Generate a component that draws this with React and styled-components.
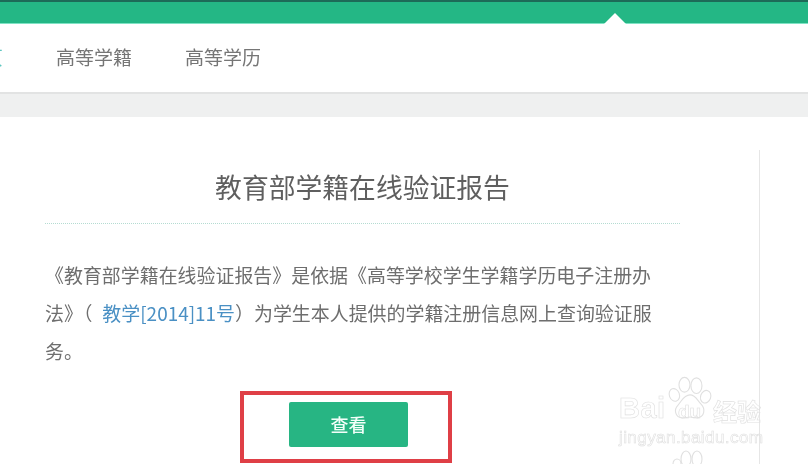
import React from "react";
import styled, { createGlobalStyle } from "styled-components";

const Global = createGlobalStyle`
  html, body { margin: 0; padding: 0; background: #fff; overflow: hidden; width: 808px; height: 464px; }
  * { box-sizing: border-box; }
`;
const Page = styled.div`
  position: relative;
  width: 808px;
  height: 464px;
  overflow: hidden;
  font-family: "Noto Sans CJK SC", "Liberation Sans", sans-serif;
`;
const Blurred = styled.div`
  filter: blur(0.7px);
`;
const TopBar = styled.header`
  position: relative;
  height: 24px;
  background: #24b785;
  border-top: 2px solid #1d6b58;
  border-bottom: 1px solid #7fe3c4;
`;
const Caret = styled.span`
  position: absolute;
  left: 604px;
  bottom: -1px;
  width: 0;
  height: 0;
  border-left: 11px solid transparent;
  border-right: 11px solid transparent;
  border-bottom: 11px solid #fff;
`;
const Nav = styled.nav`
  height: 68px;
  display: flex;
  align-items: center;
  gap: 53px;
  margin-left: -35px;
  padding-bottom: 4px;
`;
const NavItem = styled.a`
  font-size: 19px;
  line-height: 1;
  color: ${p => (p.$active ? "#5fc7c0" : "#767676")};
`;
const Band = styled.div`
  height: 25px;
  background: #eff0f0;
  border-top: 2px solid #e2e3e3;
`;
const Main = styled.main`
  padding-top: 33px;
`;
const Panel = styled.section`
  width: 760px;
  height: 320px;
  padding-left: 45px;
  border-right: 1px solid #e6e6e6;
`;
const Column = styled.div`
  width: 635px;
  display: flex;
  flex-direction: column;
`;
const Title = styled.h1`
  margin: 0;
  height: 74px;
  padding-top: 18px;
  text-align: center;
  font-size: 26.8px;
  line-height: 38px;
  font-weight: 400;
  color: #5f5f5f;
  border-bottom: 1px dotted #b5dcd2;
`;
const Text = styled.p`
  width: 620px;
  margin: 32px 0 0;
  font-size: 18.95px;
  line-height: 38px;
  color: #6e6e6e;
`;
const Link = styled.a`
  color: #4a90c4;
  margin-left: 10px;
`;
const Highlight = styled.div`
  align-self: flex-start;
  margin: 21px 0 0 195px;
  width: 212px;
  height: 72px;
  display: flex;
  align-items: flex-start;
  padding: 7px 0 0 45px;
  border: 4px solid #df3f46;
`;
const ViewButton = styled.button`
  width: 119px;
  height: 45px;
  border: 0;
  border-radius: 2px;
  background: #27b583;
  color: #f2fff9;
  padding: 0 0 2px;
  font: 500 18px "Noto Sans CJK SC", sans-serif;
`;
const Watermark = styled.div`
  position: absolute;
  left: 618px;
  top: 376px;
  width: 150px;
  height: 88px;
  color: transparent;
  -webkit-text-stroke: 0.6px #e0e0e0;
  font-family: "Liberation Sans", sans-serif;
`;
const Brand = styled.span`
  position: absolute;
  left: 1px;
  top: 15px;
  font-size: 29px;
  line-height: 34px;
  font-weight: 700;
  letter-spacing: 0.5px;
`;
const BrandDu = styled.span`
  position: absolute;
  left: 60px;
  top: 25px;
  font-size: 19px;
  line-height: 22px;
  font-weight: 700;
`;
const BrandCn = styled.span`
  position: absolute;
  left: 95px;
  top: 20px;
  font: 700 24px/30px "Noto Sans CJK SC", sans-serif;
`;
const Domain = styled.span`
  position: absolute;
  left: 1px;
  top: 50px;
  font-size: 17.2px;
  line-height: 22px;
  letter-spacing: 0.35px;
`;
const Paw = styled.svg`
  position: absolute;
  left: 49px;
  top: 0;
`;
const PawSmall = styled.svg`
  position: absolute;
  left: 53px;
  top: 74px;
`;

const PawIcon = () => (
  <Paw width="46" height="47" viewBox="0 0 50 50" fill="none" stroke="#e0e0e0" strokeWidth="1.2">
    <ellipse cx="8" cy="20" rx="5.5" ry="7" transform="rotate(-20 8 20)" />
    <ellipse cx="19" cy="9" rx="6" ry="8" />
    <ellipse cx="32" cy="10" rx="6" ry="8.5" />
    <ellipse cx="42" cy="22" rx="5.5" ry="7" transform="rotate(20 42 22)" />
    <path d="M25 20c6 0 8 6 12 10 5 5 4 14-4 15-3 .4-5-1-8-1s-6 1.500-9 1c-7-1-9-9-4-14 4-4 6-11 13-11z" />
  </Paw>
);

export default function App() {
  return (
    <Page>
      <Global />
      <Blurred>
        <TopBar><Caret /></TopBar>
        <Nav>
          <NavItem $active>首页</NavItem>
          <NavItem>高等学籍</NavItem>
          <NavItem>高等学历</NavItem>
        </Nav>
        <Band />
        <Main>
          <Panel>
            <Column>
              <Title>教育部学籍在线验证报告</Title>
              <Text>
                《教育部学籍在线验证报告》是依据《高等学校学生学籍学历电子注册办法》（<Link>教学[2014]11号</Link>）为学生本人提供的学籍注册信息网上查询验证服务。
              </Text>
              <Highlight><ViewButton>查看</ViewButton></Highlight>
            </Column>
          </Panel>
        </Main>
        <Watermark>
          <PawIcon />
          <Brand>Bai</Brand>
          <BrandDu>du</BrandDu>
          <BrandCn>经验</BrandCn>
          <Domain>jingyan.baidu.com</Domain>
          <PawSmall width="36" height="20" viewBox="0 0 36 20" fill="none" stroke="#e0e0e0" strokeWidth="1.1">
            <ellipse cx="6" cy="14" rx="4" ry="5" />
            <ellipse cx="15" cy="9" rx="5" ry="8" />
            <ellipse cx="26" cy="9" rx="5" ry="8" />
          </PawSmall>
        </Watermark>
      </Blurred>
    </Page>
  );
}
